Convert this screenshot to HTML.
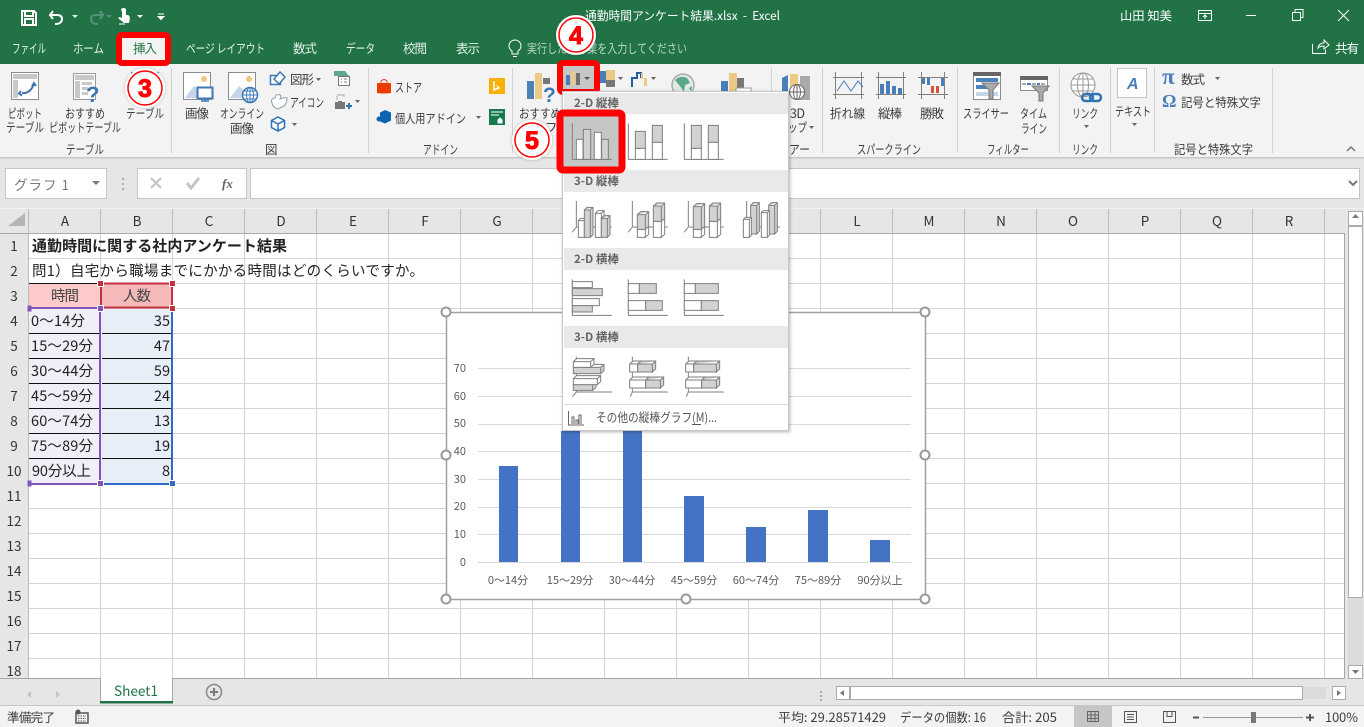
<!DOCTYPE html>
<html lang="ja"><head><meta charset="utf-8"><title>通勤時間アンケート結果.xlsx - Excel</title>
<style>
html,body{margin:0;padding:0;width:1364px;height:727px;overflow:hidden;background:#fff}
svg{display:block;font-family:"Liberation Sans","Noto Sans CJK JP",sans-serif}
text{font-size:12px;fill:#444}
.j{font-family:"Noto Sans CJK JP","Liberation Sans",sans-serif}
.tab{fill:#e4f1e9;font-family:"Noto Sans CJK JP",sans-serif;font-size:12.5px}
.hd{font-family:"Noto Sans CJK JP",sans-serif;font-size:13.5px;fill:#333}
.c{font-family:"Noto Sans CJK JP",sans-serif;font-size:14.5px;fill:#222}
.ax{font-family:"Noto Sans CJK JP",sans-serif;font-size:11px;fill:#595959}
.m{font-family:"Noto Sans CJK JP",sans-serif;font-size:11.5px;font-weight:700;fill:#666}
.r{font-family:"Noto Sans CJK JP",sans-serif;font-size:12.5px;fill:#3c3c3c}
.num{font-family:"Liberation Sans",sans-serif;font-weight:700;font-size:25px;fill:#f00;stroke:#f00;stroke-width:1}
.g path{stroke:#7f7f7f;stroke-width:3;fill:#fff}
.g .k{fill:#d2d2d2}
.g .a{fill:none}
</style></head><body>
<svg width="1364" height="727" viewBox="0 0 1364 727" xmlns="http://www.w3.org/2000/svg">
<defs>
<pattern id="grid" x="28" y="233" width="72" height="25" patternUnits="userSpaceOnUse"><rect width="72" height="25" fill="#fff"/><path d="M.5,0V25M0,.5H72" stroke="#d4d4d4" fill="none"/></pattern>
<filter id="sh" x="-10%" y="-10%" width="120%" height="120%"><feDropShadow dx="1" dy="1" stdDeviation="1.5" flood-color="#000" flood-opacity=".3"/></filter>
<filter id="cs" x="-30%" y="-30%" width="160%" height="160%"><feDropShadow dx="0" dy="0" stdDeviation="1.500" flood-color="#000" flood-opacity=".25"/></filter>
</defs>

<!-- title bar -->
<rect width="1364" height="64" fill="#217346"/>
<path d="M22,11h12l2,2v12H22zM25,11v5h8v-5M25,25v-6h8v6" fill="none" stroke="#fff" stroke-width="2"/>
<path d="M53,11l-3,4 3,4M50,15h7q5,0 5,4t-5,5h-2" fill="none" stroke="#fff" stroke-width="2"/>
<path d="M72,15h6l-3,3z" fill="#dfe"/>
<path d="M90,11l-3,4 3,4M87,15h7q5,0 5,4t-5,5h-2" transform="matrix(-1 0 0 1 190 0)" fill="none" stroke="#55917a" stroke-width="2"/>
<path d="M106,15h6l-3,3z" fill="#55917a"/>
<path d="M121,9q3-2 5,0v6h2q3,1 1,8h-5l-6-5 2-1 2,1v-6z" fill="#fff"/><path d="M119,24h6" stroke="#fff"/>
<path d="M137,15h6l-3,3z" fill="#fff"/>
<path d="M158,14h6M158,16.500l3,3 3-3z" fill="#fff" stroke="#fff"/>
<text class="j" x="585" y="20" textLength="195" lengthAdjust="spacingAndGlyphs" style="fill:#fff">通勤時間アンケート結果.xlsx&#160;&#160;-&#160;&#160;Excel</text>
<text class="j" x="1120" y="20" textLength="52" lengthAdjust="spacingAndGlyphs" style="fill:#fff">山田 知美</text>
<path d="M1198.500,10.500h13v10h-13zM1198.500,13.500h13M1205,19v-4M1203,17l2-2 2,2" fill="none" stroke="#fff"/>
<path d="M1246,15.500h10" stroke="#fff"/>
<path d="M1292.500,12.500h8v8h-8zM1295,12v-2.500h8v8h-2.500" fill="none" stroke="#fff"/>
<path d="M1338,10l11,11M1349,10l-11,11" stroke="#fff" fill="none"/>

<!-- tabs -->
<text class="tab" x="12" y="53" textLength="34" lengthAdjust="spacingAndGlyphs">ファイル</text>
<text class="tab" x="73" y="53" textLength="31" lengthAdjust="spacingAndGlyphs">ホーム</text>
<text class="tab" x="186" y="53" textLength="79" lengthAdjust="spacingAndGlyphs">ページ レイアウト</text>
<text class="tab" x="293" y="53" textLength="24">数式</text>
<text class="tab" x="346" y="53" textLength="29" lengthAdjust="spacingAndGlyphs">データ</text>
<text class="tab" x="403" y="53" textLength="24">校閲</text>
<text class="tab" x="456" y="53" textLength="24">表示</text>
<path d="M512,54v-3q-3-2-3-5a6,6 0 0 1 12,0q0,3-3,5v3zM513,56.500h4" fill="none" stroke="#fff"/>
<text class="tab" x="527" y="53" textLength="160" lengthAdjust="spacingAndGlyphs" style="fill:#b9d6c6">実行したい作業を入力してください</text>
<path d="M1312.500,44v9.500h13v-4M1318,48q1-5 6-5v-3l5,5-5,4v-3q-4,0-6,2z" fill="none" stroke="#fff"/>
<text class="tab" x="1335" y="53" textLength="24" style="fill:#fff">共有</text>

<!-- ribbon -->
<rect y="64" width="1364" height="93" fill="#f3f3f3"/>
<rect y="157" width="1364" height="1.500" fill="#c8c8c8"/>
<rect y="158.500" width="1364" height="50" fill="#e6e6e6"/>
<path d="M171.500,68V153M368.500,68V153M512.500,68V153M771.500,68V153M822.500,68V153M957.500,68V153M1059.500,68V153M1110.500,68V153M1154.500,68V153M1272.500,68V153" stroke="#d0d0d0"/>

<!-- pivot -->
<rect x="11.500" y="72.500" width="27" height="27" fill="#fff" stroke="#8c8c8c"/><path d="M13,74h24v5H13zM13,80h5v18h-5z" fill="#c8c8c8"/>
<path d="M22,93q8,1 12-9M21,91l-2,2.500 3,2M32,86l2-3 2,3" fill="none" stroke="#3d74b0" stroke-width="2"/>
<rect x="73.500" y="73.500" width="22" height="26" fill="#fff" stroke="#999"/><path d="M75,75h19v5H75zM75,81h5v17h-5zM82,82h10v3H82zM82,87h6v3h-6zM82,92h6v3h-6z" fill="#c8c8c8"/>
<text x="86" y="102" style="font-size:22px;font-weight:700;fill:#3d78b5">?</text>
<!-- table icon beneath circle -->
<path d="M131,72h28v28h-28z" fill="#fff"/><path d="M131,72h28v3h-28z" fill="#4a7ebb"/><path d="M131,82h28M131,88h28M131,94h28M145,76v24" stroke="#999"/>

<!-- image icons -->
<rect x="183.500" y="72.500" width="27" height="27" fill="#fff" stroke="#8c8c8c"/><path d="M185,98l9-12 6,5 5-3v10z" fill="#c4d5e8"/><circle cx="204" cy="79" r="3" fill="#edc87e"/>
<rect x="197.500" y="87.500" width="15" height="11" fill="#fff" stroke="#3d7ab5" stroke-width="2"/><path d="M201,101h8M205,99v2" stroke="#3d7ab5" stroke-width="1.500"/>
<rect x="228.500" y="72.500" width="27" height="27" fill="#fff" stroke="#8c8c8c"/><path d="M230,98l9-12 6,5 5-3v10z" fill="#c4d5e8"/><circle cx="249" cy="79" r="3" fill="#edc87e"/>
<circle cx="250" cy="95" r="7.500" fill="#fff" stroke="#3d7ab5" stroke-width="1.500"/><path d="M243,95h14M250,88v14M244,91h12M244,99h12" stroke="#3d7ab5" fill="none"/><ellipse cx="250" cy="95" rx="3.500" ry="7.500" fill="none" stroke="#3d7ab5"/>
<!-- shapes -->
<rect x="270.500" y="75.500" width="10" height="9" fill="#fff" stroke="#3d7ab5" stroke-width="1.500"/><path d="M280,72l5,5-6,7-5-5z" fill="#fff" stroke="#3d7ab5" stroke-width="1.500"/>
<path d="M272,103q-2-4 3-5l1-3q4-1 5,1l-1,3q5-2 7-1q0,7-5,9l-4,2q-5-1-6-6z" fill="#fff" stroke="#8ca1a8"/>
<path d="M278,117l6.500,3.500v7l-6.500,3.500-6.500-3.500v-7zM271.500,120.500l6.500,3.500 6.500-3.500M278,124v7" fill="#fff" stroke="#2b74b9" stroke-width="1.500"/>
<text class="r" x="290" y="84" textLength="24">図形</text><path d="M316,78h5l-2.500,3z" fill="#666"/>
<text class="r" x="290" y="107" textLength="34" lengthAdjust="spacingAndGlyphs">アイコン</text>
<path d="M292,123h5l-2.500,3z" fill="#666"/>
<path d="M334,71h11l4,5h-15z" fill="#5fa88b"/><rect x="338.500" y="76.500" width="11" height="9" fill="#fff" stroke="#777"/><path d="M341,79h1M344,79h3M341,82h1M344,82h3" stroke="#777"/>
<path d="M335,102h3v-1h4v1h3v7h-10z" fill="#777"/><path d="M337,100v-4M337,95h7v2" stroke="#aaa" fill="none"/><path d="M346,106h6M349,103v6" stroke="#2b74b9" stroke-width="2"/><path d="M355,100h5l-2.500,3z" fill="#666"/>

<!-- addin -->
<path d="M377,83h14v10q-7,1-14,0z" fill="#eb3c00"/><path d="M381,83v-2q3-3 6,0v2" fill="none" stroke="#eb3c00"/>
<text class="r" x="395" y="92" textLength="27" lengthAdjust="spacingAndGlyphs">ストア</text>
<path d="M385,110l6,2.500v8l-6,3-5-2v-9z" fill="#0f63b3"/><circle cx="379" cy="119" r="2.500" fill="#0f63b3"/>
<text class="r" x="395" y="123" textLength="71" lengthAdjust="spacingAndGlyphs">個人用アドイン</text><path d="M476,116h5l-2.500,3z" fill="#666"/>
<rect x="489" y="78" width="16" height="16" fill="#f9b000"/><path d="M494,81v9l5-2-2-2" stroke="#fff" stroke-width="1.500" fill="none"/>
<rect x="489" y="109" width="16" height="16" fill="#15784f"/><path d="M491,112h12M491,115h8M500,118l-2,2v3h4v-3z" stroke="#fff" fill="#fff"/>

<!-- recommended chart + chart icons -->
<path d="M527,81h7v18h-7z" fill="#4d81b9"/><path d="M535,73h7v26h-7z" fill="#ecc984"/><path d="M543,78h7v6h-7z" fill="#777"/>
<text x="543" y="102" style="font-size:21px;font-weight:700;fill:#3d78b5">?</text>
<text class="r" x="519" y="118" textLength="42" lengthAdjust="spacingAndGlyphs">おすすめ</text>
<text class="r" x="545" y="132">フ</text>
<!-- bar dropdown -->
<rect x="560" y="63" width="37" height="29" rx="3" fill="#c6c6c6" stroke="#f00" stroke-width="6"/>
<path d="M566,75h4v10h-4z" fill="#4a7ebb"/><path d="M571,71h4v14h-4z" fill="#ecc984"/><path d="M576,73h4v12h-4z" fill="#707070"/><path d="M584,77h6l-3,3z" fill="#555"/>
<path d="M600,71h6v12h-6z" fill="#4a7ebb"/><path d="M606,70h9v10h-9z" fill="#ecc984"/><path d="M606,80h9v7h-9z" fill="#777"/><path d="M618,77h5l-2.500,3z" fill="#666"/>
<path d="M632,87v-9h5v-5h4v5" fill="none" stroke="#215ea0" stroke-width="2"/><path d="M641,73h2v5h4v8h-3v-7h-3z" fill="#ecc984"/><path d="M651,77h5l-2.500,3z" fill="#666"/>
<circle cx="683" cy="85" r="11" fill="#dfe9e5" stroke="#aaa" stroke-width="1.500"/><path d="M675,80q5-5 12-2l3,5-5,2-1,7-4-6zM689,88l3-2-1,5z" fill="#5aa688"/>
<path d="M721,81h7v19h-7z" fill="#4a7ebb"/><path d="M729,73h8v27h-8z" fill="#ecc984"/><path d="M737,78h7v12h-7z" fill="#777"/>
<rect x="736" y="88" width="15" height="12" fill="#fff" stroke="#999"/>
<path d="M782,78l6-3v22l-6 2z" fill="#4a7ebb"/><path d="M790,74h8v20h-8z" fill="#ecc984"/><path d="M800,76h10v24h-10z" fill="#aaa"/><circle cx="797" cy="92" r="7.500" fill="#fff" stroke="#666"/><path d="M790,92h14M797,85v14" stroke="#666"/><ellipse cx="797" cy="92" rx="3.500" ry="7.500" fill="none" stroke="#666"/>
<text class="r" x="790" y="118" textLength="15">3D</text>
<text class="r" x="788" y="132" textLength="19" lengthAdjust="spacingAndGlyphs">ップ</text><path d="M809,126h5l-2.500,3z" fill="#666"/>
<text class="r" x="789" y="154" textLength="21" lengthAdjust="spacingAndGlyphs">アー</text>
<!-- sparklines -->
<path d="M835.500,72v27M861.500,72v27M833,77.500h31M833,94.500h31" stroke="#808080" fill="none"/>
<path d="M837,91l7-10 7,10 7-10 5,6" stroke="#4a7ebb" fill="none"/>
<path d="M878.500,72v27M903.500,72v27M876,77.500h30M876,94.500h30" stroke="#808080" fill="none"/>
<path d="M880,84h4v10h-4zM886,81h4v13h-4zM892,86h4v8h-4zM898,88h4v6h-4z" fill="#4a7ebb"/>
<path d="M921.500,72v27M944.500,72v27M918,77.500h30M918,94.500h30" stroke="#808080" fill="none"/>
<path d="M922,78h3v6h-3zM927,78h3v7h-3zM941,78h3v8h-3z" fill="#4a7ebb"/><path d="M931,86h3v7h-3zM936,86h3v7h-3z" fill="#d5513a"/>
<text class="r" x="830" y="118" textLength="35" lengthAdjust="spacingAndGlyphs">折れ線</text>
<text class="r" x="878" y="118" textLength="24">縦棒</text>
<text class="r" x="920" y="118" textLength="24">勝敗</text>
<text class="r" x="857" y="154" textLength="64" lengthAdjust="spacingAndGlyphs">スパークライン</text>
<!-- slicer -->
<rect x="973.500" y="72.500" width="27" height="27" fill="#fff" stroke="#8c8c8c"/><rect x="973" y="72" width="28" height="4" fill="#666"/><path d="M976,78h22v4h-22zM976,85h11v4h-11z" fill="#4d81b9"/><path d="M976,92h22v4h-22z" fill="#c4d5e8"/>
<path d="M982,83h17l-6,7v9h-4v-9z" fill="#aaa" stroke="#777"/>
<rect x="1020.500" y="76.500" width="27" height="14" fill="#fff" stroke="#8c8c8c"/><rect x="1020" y="76" width="28" height="4" fill="#666"/><path d="M1022,83h4v2h-4zM1032,83h4v2h-4zM1041,83h4v2h-4z" fill="#aaa"/><path d="M1027,83h4v2h-4zM1037,83h3v2h-3z" fill="#4d81b9"/>
<path d="M1032,86h17l-6,7v8h-4v-8z" fill="#aaa" stroke="#777"/>
<text class="r" x="963" y="118" textLength="46" lengthAdjust="spacingAndGlyphs">スライサー</text>
<text class="r" x="1020" y="118" textLength="27" lengthAdjust="spacingAndGlyphs">タイム</text>
<text class="r" x="1021" y="133" textLength="26" lengthAdjust="spacingAndGlyphs">ライン</text>
<text class="r" x="987" y="154" textLength="42" lengthAdjust="spacingAndGlyphs">フィルター</text>
<!-- link -->
<circle cx="1083" cy="85" r="12" fill="#fff" stroke="#999"/><path d="M1071,85h24M1083,73v24M1073,79h20M1073,91h20" stroke="#999" fill="none"/><ellipse cx="1083" cy="85" rx="5.500" ry="12" fill="none" stroke="#999"/>
<rect x="1082" y="94" width="11" height="7" rx="3.500" fill="none" stroke="#2f75b5" stroke-width="2.500"/><rect x="1090" y="94" width="11" height="7" rx="3.500" fill="none" stroke="#2f75b5" stroke-width="2.500"/>
<text class="r" x="1072" y="118" textLength="26" lengthAdjust="spacingAndGlyphs">リンク</text><path d="M1084,125h5l-2.500,3z" fill="#666"/>
<text class="r" x="1072" y="154" textLength="26" lengthAdjust="spacingAndGlyphs">リンク</text>
<!-- text -->
<rect x="1117.500" y="68.500" width="29" height="29" fill="#fff" stroke="#c6c6c6"/><text x="1127" y="89" style="font-size:16px;font-weight:700;font-style:italic;fill:#4a7ebb">A</text>
<text class="r" x="1115" y="116" textLength="36" lengthAdjust="spacingAndGlyphs">テキスト</text><path d="M1132,123h5l-2.500,3z" fill="#666"/>
<text x="1162" y="84" style="font-family:'Liberation Serif',serif;font-size:23px;font-weight:700;fill:#4a7ebb">π</text>
<text class="r" x="1181" y="84" textLength="24">数式</text><path d="M1215,77h5l-2.500,3z" fill="#666"/>
<text x="1162" y="107" style="font-family:'Liberation Serif',serif;font-size:18px;font-weight:700;fill:#4a7ebb">Ω</text>
<text class="r" x="1181" y="107" textLength="80" lengthAdjust="spacingAndGlyphs">記号と特殊文字</text>
<text class="r" x="1174" y="154" textLength="79" lengthAdjust="spacingAndGlyphs">記号と特殊文字</text>
<!-- ribbon labels -->
<text class="r" x="8" y="118" textLength="34" lengthAdjust="spacingAndGlyphs">ピボット</text>
<text class="r" x="6" y="132" textLength="38" lengthAdjust="spacingAndGlyphs">テーブル</text>
<text class="r" x="65" y="118" textLength="40" lengthAdjust="spacingAndGlyphs">おすすめ</text>
<text class="r" x="49" y="132" textLength="72" lengthAdjust="spacingAndGlyphs">ピボットテーブル</text>
<text class="r" x="126" y="118" textLength="38" lengthAdjust="spacingAndGlyphs">テーブル</text>
<text class="r" x="66" y="154" textLength="38" lengthAdjust="spacingAndGlyphs">テーブル</text>
<text class="r" x="185" y="118" textLength="24">画像</text>
<text class="r" x="220" y="118" textLength="44" lengthAdjust="spacingAndGlyphs">オンライン</text>
<text class="r" x="230" y="133" textLength="24">画像</text>
<text class="r" x="265" y="154">図</text>
<text class="r" x="423" y="154" textLength="35" lengthAdjust="spacingAndGlyphs">アドイン</text>
<path d="M1347,151l4-4 4,4" fill="none" stroke="#777" stroke-width="1.500"/>

<!-- formula bar -->
<rect x="5.500" y="168.500" width="101" height="30" fill="#fff" stroke="#c6c6c6"/>
<text class="r" x="14" y="190" textLength="55" style="font-size:13.5px;fill:#777">グラフ 1</text><path d="M92,181h8l-4,4z" fill="#777"/>
<path d="M122,178h2v2h-2zM122,183h2v2h-2zM122,188h2v2h-2z" fill="#aaa"/>
<rect x="137.500" y="168.500" width="109" height="30" fill="#fff" stroke="#c6c6c6"/>
<path d="M151,178l10,10M161,178l-10,10" stroke="#c3c3c3" stroke-width="2"/>
<path d="M187,183l4,5 8-10" fill="none" stroke="#c3c3c3" stroke-width="3"/>
<text x="222" y="188" style="font-family:'Liberation Serif',serif;font-size:13px;font-weight:700;font-style:italic;fill:#666">fx</text>
<rect x="250.500" y="168.500" width="1109" height="30" fill="#fff" stroke="#c6c6c6"/>
<path d="M1349,181l4,4 4-4" fill="none" stroke="#777" stroke-width="2"/>

<!-- sheet -->
<rect x="0" y="209" width="1364" height="470" fill="#e6e6e6"/>
<rect x="28" y="233" width="1317" height="445" fill="url(#grid)"/>
<path d="M28.500,209V678M100.500,209v24M172.500,209v24M244.500,209v24M316.500,209v24M388.500,209v24M460.500,209v24M532.500,209v24M604.500,209v24M676.500,209v24M748.500,209v24M820.500,209v24M892.500,209v24M964.500,209v24M1036.500,209v24M1108.500,209v24M1180.500,209v24M1252.500,209v24M1324.500,209v24" stroke="#bcbcbc"/>
<path d="M0,233.500H1345" stroke="#aaa"/>
<path d="M8,226l17-13v13z" fill="#b5b5b5"/>
<g text-anchor="middle">
<text class="hd" x="65" y="226">A</text><text class="hd" x="137" y="226">B</text><text class="hd" x="209" y="226">C</text><text class="hd" x="281" y="226">D</text><text class="hd" x="353" y="226">E</text><text class="hd" x="425" y="226">F</text><text class="hd" x="497" y="226">G</text><text class="hd" x="857" y="226">L</text><text class="hd" x="929" y="226">M</text><text class="hd" x="1001" y="226">N</text><text class="hd" x="1073" y="226">O</text><text class="hd" x="1145" y="226">P</text><text class="hd" x="1217" y="226">Q</text><text class="hd" x="1289" y="226">R</text>
<text class="hd" x="14" y="251">1</text><text class="hd" x="14" y="276">2</text><text class="hd" x="14" y="301">3</text><text class="hd" x="14" y="326">4</text><text class="hd" x="14" y="351">5</text><text class="hd" x="14" y="376">6</text><text class="hd" x="14" y="401">7</text><text class="hd" x="14" y="426">8</text><text class="hd" x="14" y="451">9</text><text class="hd" x="14" y="476">10</text><text class="hd" x="14" y="501">11</text><text class="hd" x="14" y="526">12</text><text class="hd" x="14" y="551">13</text><text class="hd" x="14" y="576">14</text><text class="hd" x="14" y="601">15</text><text class="hd" x="14" y="626">16</text><text class="hd" x="14" y="651">17</text><text class="hd" x="14" y="676">18</text>
</g>
<path d="M1344.500,233V678M0,678.500H1345" stroke="#a6a6a6"/>
<rect x="1345" y="209" width="19" height="470" fill="#e6e6e6"/>
<rect x="1348" y="226" width="15" height="439" fill="#dcdcdc"/>
<rect x="1348.500" y="211.500" width="14" height="14" fill="#fff" stroke="#ababab"/><path d="M1352,218h7l-3.500-4z" fill="#777"/>
<rect x="1348.500" y="226.500" width="14" height="371" fill="#fff" stroke="#ababab"/>
<rect x="1348.500" y="665.500" width="14" height="13" fill="#fff" stroke="#ababab"/><path d="M1352,670h7l-3.500,4z" fill="#777"/>

<!-- table -->
<rect x="29" y="284" width="71" height="24" fill="#ffcaca"/>
<rect x="101" y="284" width="71" height="24" fill="#f5b9b9"/>
<rect x="29" y="309" width="71" height="174" fill="#f1eef8"/>
<rect x="101" y="309" width="71" height="174" fill="#e7eef8"/>
<path d="M29,283.500H100M29,333.500H99M102,333.500H171M29,358.500H99M102,358.500H171M29,383.500H99M102,383.500H171M29,408.500H99M102,408.500H171M29,433.500H99M102,433.500H171M29,458.500H99M102,458.500H171" stroke="#111"/>
<text class="c" x="32" y="251" style="font-weight:700;font-size:15px" textLength="255">通勤時間に関する社内アンケート結果</text>
<text class="c" x="32" y="276" textLength="392">問1）自宅から職場までにかかる時間はどのくらいですか。</text>
<text class="c" x="51" y="301" textLength="28" style="fill:#444">時間</text><text class="c" x="123" y="301" textLength="28" style="fill:#444">人数</text>
<text class="c" x="31" y="326" textLength="54">0〜14分</text><text class="c" x="31" y="351" textLength="62">15〜29分</text><text class="c" x="31" y="376" textLength="62">30〜44分</text><text class="c" x="31" y="401" textLength="62">45〜59分</text><text class="c" x="31" y="426" textLength="62">60〜74分</text><text class="c" x="31" y="451" textLength="62">75〜89分</text><text class="c" x="32" y="476" textLength="59">90分以上</text>
<g text-anchor="end"><text class="c" x="170" y="326">35</text><text class="c" x="170" y="351">47</text><text class="c" x="170" y="376">59</text><text class="c" x="170" y="401">24</text><text class="c" x="170" y="426">13</text><text class="c" x="170" y="451">19</text><text class="c" x="170" y="476">8</text></g>
<!-- range highlight -->
<path d="M101,283.500V307.500H172V283.500z" fill="none" stroke="#c4313b" stroke-width="2"/>
<path d="M29,308H100V484H29" fill="none" stroke="#8154b8" stroke-width="2"/>
<path d="M172,308V484H103" fill="none" stroke="#2f6bc8" stroke-width="2"/>
<g stroke="#fff">
<rect x="97.500" y="280.500" width="6" height="6" fill="#c4313b"/><rect x="169.500" y="280.500" width="6" height="6" fill="#c4313b"/><rect x="169.500" y="305.500" width="6" height="6" fill="#c4313b"/>
<rect x="97.500" y="305.500" width="6" height="6" fill="#8154b8"/><rect x="27.500" y="305.500" width="4" height="6" fill="#8154b8" stroke="none"/><rect x="27.500" y="480.500" width="4" height="6" fill="#8154b8" stroke="none"/><rect x="97.500" y="480.500" width="6" height="6" fill="#8154b8"/>
<rect x="169.500" y="480.500" width="6" height="6" fill="#2f6bc8"/></g>

<!-- chart -->
<rect x="446.500" y="312.500" width="479" height="287" fill="#fff" stroke="#a0a0a0" stroke-width="1.500"/>
<path d="M478,368.500H911M478,396.500H911M478,424.500H911M478,451.500H911M478,479.500H911M478,507.500H911M478,534.500H911M478,562.500H911" stroke="#d9d9d9"/>
<g text-anchor="end"><text class="ax" x="466" y="372">70</text><text class="ax" x="466" y="400">60</text><text class="ax" x="466" y="427">50</text><text class="ax" x="466" y="455">40</text><text class="ax" x="466" y="483">30</text><text class="ax" x="466" y="510">20</text><text class="ax" x="466" y="538">10</text><text class="ax" x="466" y="566">0</text></g>
<path d="M499,466h19v96h-19zM561,431h19v131h-19zM623,400h19v162h-19zM684,496h20v66h-20zM746,527h20v35h-20zM808,510h20v52h-20zM870,540h20v22h-20z" fill="#4472c4"/>
<g text-anchor="middle"><text class="ax" x="508" y="584">0〜14分</text><text class="ax" x="570" y="584">15〜29分</text><text class="ax" x="632" y="584">30〜44分</text><text class="ax" x="694" y="584">45〜59分</text><text class="ax" x="756" y="584">60〜74分</text><text class="ax" x="818" y="584">75〜89分</text><text class="ax" x="880" y="584">90分以上</text></g>
<g fill="#fff" stroke="#999" stroke-width="2"><circle cx="446" cy="312" r="4.500"/><circle cx="925" cy="312" r="4.500"/><circle cx="446" cy="455" r="4.500"/><circle cx="925" cy="455" r="4.500"/><circle cx="446" cy="599" r="4.500"/><circle cx="686" cy="599" r="4.500"/><circle cx="925" cy="599" r="4.500"/></g>

<!-- dropdown menu -->
<rect x="562.500" y="91.500" width="226" height="339" fill="#fff" stroke="#c8c8c8" filter="url(#sh)"/>
<rect x="564" y="93" width="224" height="21" fill="#e9e9e9"/>
<rect x="564" y="170" width="224" height="22" fill="#e9e9e9"/>
<rect x="564" y="248" width="224" height="22" fill="#e9e9e9"/>
<rect x="564" y="326" width="224" height="22" fill="#e9e9e9"/>
<text class="m" x="574" y="107">2-D 縦棒</text>
<text class="m" x="574" y="185">3-D 縦棒</text>
<text class="m" x="574" y="263">2-D 横棒</text>
<text class="m" x="574" y="341">3-D 横棒</text>
<path d="M564,404.500H788" stroke="#ddd"/>
<path d="M568.500,411V425H584M572,424v-7h2v7M576,424v-4h2v4M579,424v-9h2v9" fill="none" stroke="#666"/>
<text class="r" x="596" y="422" textLength="121" lengthAdjust="spacingAndGlyphs" style="fill:#555">その他の縦棒グラフ(M)...</text>
<path d="M692,424.500h9" stroke="#555"/>
<!-- selected item -->
<rect x="560" y="113" width="62" height="57" rx="3" fill="#c6c6c6" stroke="#f00" stroke-width="7"/>
<!-- chart type glyphs -->
<g class="g" transform="translate(555,90) scale(.33333)">
<path class="a" d="M52,100V208H170"/><path d="M64,148h20v60h-20z"/><path class="k" d="M85,118h22v90h-22z"/><path d="M118,127h21v81h-21z"/><path class="k" d="M140,148h20v60h-20z"/>
<path class="a" d="M220,100V208H338"/><path class="k" d="M241,124h30v51h-30z"/><path d="M241,175h30v33h-30z"/><path class="k" d="M292,106h30v51h-30z"/><path d="M292,157h30v51h-30z"/>
<path class="a" d="M388,100V208H506"/><path class="k" d="M409,106h30v69h-30z"/><path d="M409,175h30v33h-30z"/><path class="k" d="M460,106h30v51h-30z"/><path d="M460,157h30v51h-30z"/>
<!-- 3D column -->
<path class="a" d="M64,333V411H170M52,427L64,411"/>
<path d="M70,392h18v50h-18zl6-7h18v50l-6,7v-50l6-7"/><path class="k" d="M88,360h18v82h-18zl8-8h18v82l-8,8v-82l8-8"/><path d="M121,370h18v72h-18zl8-8h18v72l-8,8v-72l8-8"/><path class="k" d="M139,385h18v57h-18zl8-8h18v57l-8,8v-57l8-8"/>
<path class="a" d="M232,333V411H338M220,427L232,411"/>
<path d="M247,418h24v24h-24zl10-9h24v24l-10,9v-24l10-9"/><path class="k" d="M247,374h24v44h-24zl10-9h24v44l-10,9v-44l10-9"/><path d="M295,394h24v48h-24zl10-9h24v48l-10,9v-48l10-9"/><path class="k" d="M295,348h24v46h-24zl10-9h24v46l-10,9v-46l10-9"/>
<path class="a" d="M400,333V411H506M388,427L400,411"/>
<path d="M415,418h24v24h-24zl10-9h24v24l-10,9v-24l10-9"/><path class="k" d="M415,350h24v68h-24zl10-9h24v68l-10,9v-68l10-9"/><path d="M463,394h24v48h-24zl10-9h24v48l-10,9v-48l10-9"/><path class="k" d="M463,348h24v46h-24zl10-9h24v46l-10,9v-46l10-9"/>
<path class="a" d="M575,333V411H675M563,427L575,411"/>
<path class="k" d="M587,346h18v86h-18zl8-8h18v86l-8,8v-86l8-8"/><path class="k" d="M641,346h18v86h-18zl8-8h18v86l-8,8v-86l8-8"/><path d="M565,388h18v54h-18zl6-6h18v54l-6,6v-54l6-6"/><path d="M619,368h18v74h-18zl6-6h18v74l-6,6v-74l6-6"/>
<!-- 2D bar -->
<path class="a" d="M52,568V676H170"/><path d="M52,575h60v18h-60z"/><path class="k" d="M52,596h90v21h-90z"/><path d="M52,626h81v21h-81z"/><path class="k" d="M52,647h60v19h-60z"/>
<path class="a" d="M220,568V676H338"/><path d="M220,581h33v29h-33z"/><path class="k" d="M253,581h51v29h-51z"/><path d="M220,632h52v29h-52z"/><path class="k" d="M272,632h50v29h-50z"/>
<path class="a" d="M388,568V676H506"/><path d="M388,581h33v29h-33z"/><path class="k" d="M421,581h69v29h-69z"/><path d="M388,632h51v29h-51z"/><path class="k" d="M439,632h51v29h-51z"/>
<!-- 3D bar -->
<path class="a" d="M64,800V906H170M52,920L64,906"/>
<path class="k" d="M55,832h82v19h-82zl10-9h82v19l-10,9v-19l10-9"/><path d="M55,815h52v17h-52zl10-9h52v17l-10,9v-17l10-9"/><path class="k" d="M55,884h58v17h-58zl10-9h58v17l-10,9v-17l10-9"/><path d="M55,866h72v18h-72zl10-9h72v18l-10,9v-18l10-9"/>
<path class="a" d="M232,800V906H338M226,920L232,906"/>
<path d="M224,822h24v24h-24zl10-9h24v24l-10,9v-24l10-9"/><path class="k" d="M248,822h44v24h-44zl10-9h44v24l-10,9v-24l10-9"/><path d="M224,870h48v24h-48zl10-9h48v24l-10,9v-24l10-9"/><path class="k" d="M272,870h44v24h-44zl10-9h44v24l-10,9v-24l10-9"/>
<path class="a" d="M400,800V906H506M394,920L400,906"/>
<path d="M392,822h24v24h-24zl10-9h24v24l-10,9v-24l10-9"/><path class="k" d="M416,822h68v24h-68zl10-9h68v24l-10,9v-24l10-9"/><path d="M392,870h48v24h-48zl10-9h48v24l-10,9v-24l10-9"/><path class="k" d="M440,870h44v24h-44zl10-9h44v24l-10,9v-24l10-9"/>
</g>

<!-- insert tab highlight -->
<rect x="119" y="35" width="49" height="28" rx="3" fill="#f3f3f3" stroke="#f00" stroke-width="6"/>
<text class="r" x="133" y="53" textLength="24" style="fill:#217346">挿入</text>

<!-- number circles -->
<g><circle cx="145" cy="88" r="20" fill="#fff" fill-opacity=".9" filter="url(#cs)"/><circle cx="145" cy="88" r="17" fill="none" stroke="#f00" stroke-width="1.500"/><text class="num" x="145" y="97" text-anchor="middle">3</text></g>
<g><circle cx="576" cy="35" r="20" fill="#fff" filter="url(#cs)"/><circle cx="576" cy="35" r="17" fill="none" stroke="#f00" stroke-width="1.500"/><text class="num" x="576" y="44" text-anchor="middle">4</text></g>
<g><circle cx="532" cy="140" r="20" fill="#fff" filter="url(#cs)"/><circle cx="532" cy="140" r="17" fill="none" stroke="#f00" stroke-width="1.500"/><text class="num" x="532" y="149" text-anchor="middle">5</text></g>

<!-- sheet tabs -->
<rect y="679" width="1364" height="26" fill="#e6e6e6"/>
<path d="M0,678.500H1345" stroke="#a6a6a6"/>
<path d="M31,691l-4,3.500 4,3.500zM56,691l4,3.500-4,3.500z" fill="#c3c3c3"/>
<path d="M100.500,678V701.500H172.500V678" fill="#fff" stroke="#a6a6a6"/>
<rect x="101" y="677" width="71" height="25" fill="#fff"/>
<rect x="100" y="701" width="73" height="2.500" fill="#217346"/>
<text x="114" y="696" textLength="44" lengthAdjust="spacingAndGlyphs" style="font-size:14px;fill:#217346;font-family:'Noto Sans CJK JP',sans-serif">Sheet1</text>
<circle cx="214" cy="692" r="7.500" fill="none" stroke="#8a8a8a" stroke-width="1.500"/><path d="M214,688v8M210,692h8" stroke="#7a7a7a" stroke-width="2"/>
<path d="M821,691v2M821,695v2M821,699v2" stroke="#aaa" stroke-width="2"/>
<rect x="836.500" y="686.500" width="13" height="13" fill="#fff" stroke="#ababab"/><path d="M844,690v6l-4-3z" fill="#777"/>
<rect x="850.500" y="686.500" width="452" height="13" fill="#fff" stroke="#ababab"/>
<rect x="1303" y="687" width="23" height="12" fill="#dcdcdc"/>
<rect x="1332.500" y="686.500" width="13" height="13" fill="#fff" stroke="#ababab"/><path d="M1337,690v6l4-3z" fill="#777"/>

<!-- status bar -->
<path d="M0,705.500H1364" stroke="#c8c8c8"/>
<rect y="706" width="1364" height="21" fill="#f3f3f3"/>
<text class="r" x="7" y="722" textLength="48">準備完了</text>
<path d="M76,713h12v10H76z" fill="none" stroke="#555" stroke-width="1.500"/><circle cx="78" cy="712" r="2.500" fill="#555"/><path d="M78,716h8M78,718.500h8M78,721h8" stroke="#555" stroke-dasharray="1.500 1"/>
<text class="r" x="778" y="722" textLength="108" lengthAdjust="spacingAndGlyphs">平均: 29.28571429</text>
<text class="r" x="900" y="722" textLength="86" lengthAdjust="spacingAndGlyphs">データの個数: 16</text>
<text class="r" x="1002" y="722" textLength="55" lengthAdjust="spacingAndGlyphs">合計: 205</text>
<rect x="1074" y="706" width="38" height="21" fill="#c6c6c6"/>
<path d="M1087.500,711.500h11v10h-11zM1091,712v9M1095,712v9M1088,715h10M1088,718.500h10" fill="none" stroke="#666"/>
<path d="M1124.500,711.500h12v11h-12zM1127,714.500h7M1127,717h7M1127,719.500h7" fill="none" stroke="#555"/>
<path d="M1163.500,711.500h12v11h-12zM1167,712v4.500h5V712" fill="none" stroke="#555"/>
<path d="M1193,717.500h6" stroke="#555" stroke-width="2"/>
<path d="M1203,717.500h100" stroke="#999"/>
<rect x="1251" y="712" width="5" height="11" fill="#777"/>
<path d="M1306,717.500h8M1310,714v7" stroke="#555" stroke-width="2"/>
<text class="r" x="1325" y="722" textLength="33" lengthAdjust="spacingAndGlyphs">100%</text>
</svg>
</body></html>
